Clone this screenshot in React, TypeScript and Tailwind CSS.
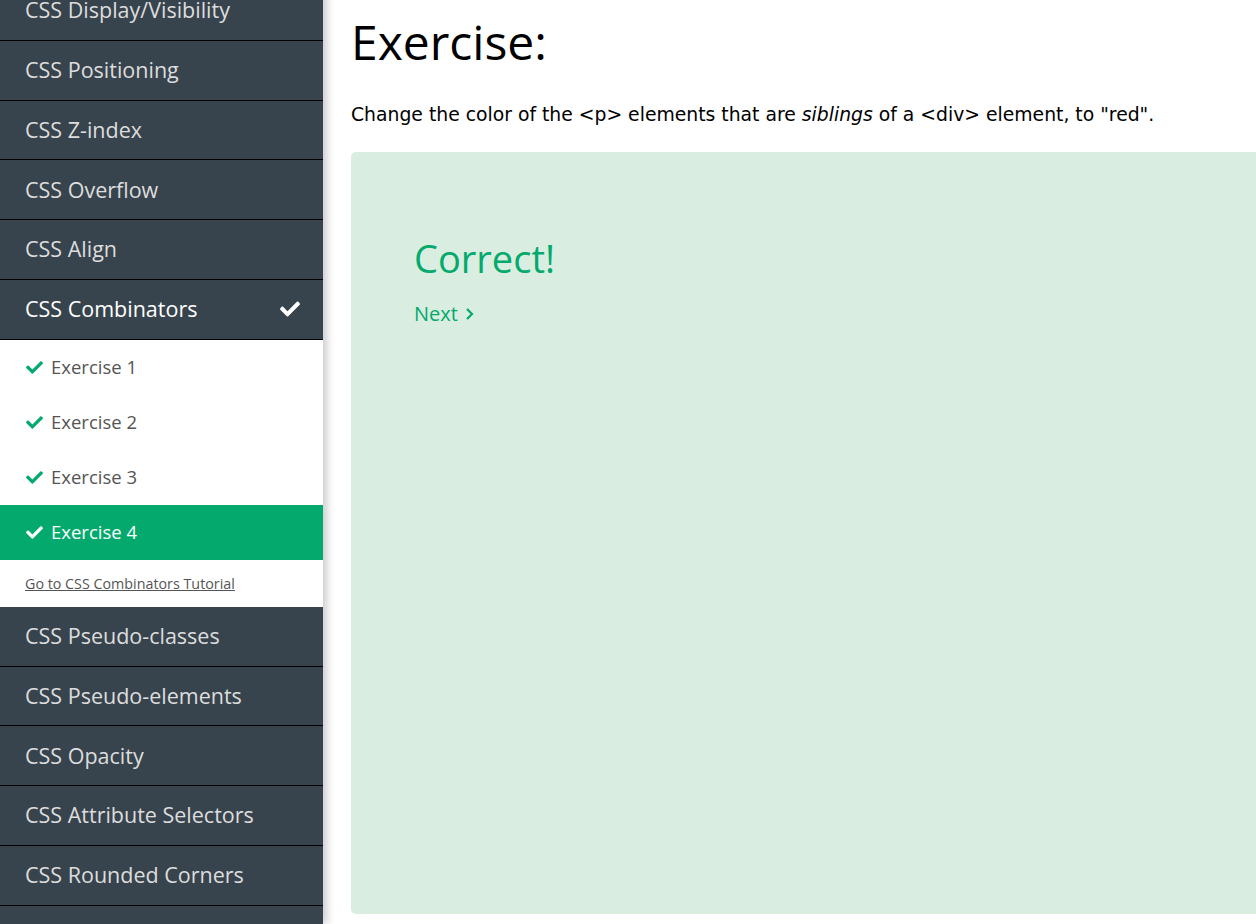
import React from "react";
import { FaCheck } from "react-icons/fa";

const before = ["CSS Display/Visibility", "CSS Positioning", "CSS Z-index", "CSS Overflow", "CSS Align"];
const after = ["CSS Pseudo-classes", "CSS Pseudo-elements", "CSS Opacity", "CSS Attribute Selectors", "CSS Rounded Corners", "CSS Image Sprites"];

function NavItem({ label }: { label: string }) {
  return (
    <div className="h-[59.8px] border-b border-black flex items-center pl-[25px] text-[21.5px] text-[#dddddd] shrink-0">
      {label}
    </div>
  );
}

function Ex({ n, active }: { n: number; active?: boolean }) {
  return (
    <div
      className={
        "h-[55px] flex items-center pl-[25px] text-[18.5px] shrink-0 " +
        (active ? "bg-[#04aa6d] text-white" : "bg-white text-[#555555]")
      }
    >
      <FaCheck className={"w-[19px] h-[17px] mr-[7px] " + (active ? "text-white" : "text-[#04aa6d]")} />
      <span>Exercise {n}</span>
    </div>
  );
}

export default function App() {
  return (
    <div
      className="w-[1256px] h-[924px] overflow-hidden flex bg-white"
      style={{ fontFamily: '"Open Sans", "Noto Sans", sans-serif' }}
    >
      <div className="w-[323px] shrink-0 bg-[#38444d] flex flex-col shadow-[4px_0_8px_rgba(0,0,0,0.2)] relative z-10 -mt-[19px]">
        {before.map((l) => (
          <NavItem key={l} label={l} />
        ))}
        <div className="h-[59.8px] border-b border-black flex items-center justify-between pl-[25px] pr-[22px] text-[21.5px] text-white shrink-0">
          <span>CSS Combinators</span>
          <FaCheck className="w-[22px] h-[20px] text-white" />
        </div>
        <div className="bg-white flex flex-col">
          <Ex n={1} />
          <Ex n={2} />
          <Ex n={3} />
          <Ex n={4} active />
          <div className="h-[47px] flex items-center pl-[25px] text-[14.3px] text-[#555555] underline">
            Go to CSS Combinators Tutorial
          </div>
        </div>
        {after.map((l) => (
          <NavItem key={l} label={l} />
        ))}
      </div>
      <div className="flex-1 pl-[28px] flex flex-col min-w-0">
        <h1 className="text-[48px] font-normal text-black leading-none mt-[18px] h-[58px]">Exercise:</h1>
        <p
          className="mt-[27px] text-[18.8px] leading-[24px] text-black whitespace-nowrap"
          style={{ fontFamily: '"DejaVu Sans", Verdana, sans-serif' }}
        >
          Change the color of the &lt;p&gt; elements that are <i>siblings</i> of a &lt;div&gt; element, to "red".
        </p>
        <div className="mt-[25px] w-[1000px] h-[762px] bg-[#d9ede1] rounded-[5px] pl-[63px] pt-[87px] shrink-0">
          <div className="text-[38px] text-[#04aa6d] leading-none">Correct!</div>
          <div className="mt-[22px] text-[20px] text-[#04aa6d] flex items-center gap-[7px]">
            <span>Next</span>
            <svg width="9" height="14" viewBox="0 0 9 14" fill="none">
              <path d="M2 2l5 5-5 5" stroke="#04aa6d" strokeWidth="2.2" />
            </svg>
          </div>
        </div>
      </div>
    </div>
  );
}
